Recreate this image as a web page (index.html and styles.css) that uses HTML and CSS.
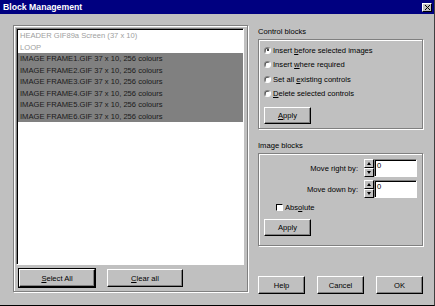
FILE: index.html
```html
<!DOCTYPE html>
<html lang="en">
<head>
    <meta charset="UTF-8">
    <title>Block Management</title>
    <link rel="stylesheet" href="styles.css">
</head>
<body>
    <div class="window">
        <div class="titlebar">
            <span class="title">Block Management</span>
            <span class="close">
                <svg width="5" height="5" viewBox="0 0 5 5"><path d="M0 0L5 5M5 0L0 5" stroke="#000" stroke-width="1"/></svg>
            </span>
        </div>
        <div class="main">
            <div class="group left-group">
                <ul class="list">
                    <li class="dim">HEADER GIF89a Screen (37 x 10)</li>
                    <li class="dim">LOOP</li>
                    <li class="sel">IMAGE FRAME1.GIF 37 x 10, 256 colours</li>
                    <li class="sel">IMAGE FRAME2.GIF 37 x 10, 256 colours</li>
                    <li class="sel">IMAGE FRAME3.GIF 37 x 10, 256 colours</li>
                    <li class="sel">IMAGE FRAME4.GIF 37 x 10, 256 colours</li>
                    <li class="sel">IMAGE FRAME5.GIF 37 x 10, 256 colours</li>
                    <li class="sel">IMAGE FRAME6.GIF 37 x 10, 256 colours</li>
                </ul>
                <div class="list-buttons">
                    <button class="btn default"><u>S</u>elect All</button>
                    <button class="btn"><u>C</u>lear all</button>
                </div>
            </div>

            <div class="side">
                <div class="caption">Control blocks</div>
                <div class="group control-group">
                    <div class="radio-row"><span class="radio checked"></span><span>Insert <u>b</u>efore selected images</span></div>
                    <div class="radio-row"><span class="radio"></span><span>Insert <u>w</u>here required</span></div>
                    <div class="radio-row"><span class="radio"></span><span>Set all <u>e</u>xisting controls</span></div>
                    <div class="radio-row"><span class="radio"></span><span><u>D</u>elete selected controls</span></div>
                    <button class="btn apply"><u>A</u>pply</button>
                </div>

                <div class="caption second">Image blocks</div>
                <div class="group image-group">
                    <div class="field-row">
                        <span class="field-label">Move right by:</span>
                        <span class="spin"><span class="spin-up"></span><span class="spin-down"></span></span>
                        <span class="field">0</span>
                    </div>
                    <div class="field-row">
                        <span class="field-label">Move down by:</span>
                        <span class="spin"><span class="spin-up"></span><span class="spin-down"></span></span>
                        <span class="field">0</span>
                    </div>
                    <div class="check-row"><span class="check"></span><span>Abs<u>o</u>lute</span></div>
                    <button class="btn apply">Apply</button>
                </div>

                <div class="dialog-buttons">
                    <button class="btn">Help</button>
                    <button class="btn">Cancel</button>
                    <button class="btn">OK</button>
                </div>
            </div>
        </div>
    </div>
</body>
</html>
```

FILE: styles.css
```css
*{
    box-sizing: border-box;
}
body{
    margin: 0;
    background-color: #c0c0c0;
    font-family: "Liberation Sans", Arial, sans-serif;
    font-size: 7.6px;
    color: #000;
}
.window{
    width: 435px;
    height: 306px;
    border-bottom: 1px solid #000;
    border-right: 1px solid #404040;
    overflow: hidden;
}
.titlebar{
    height: 14px;
    background-color: #000080;
    display: flex;
    align-items: center;
    justify-content: space-between;
    padding: 0 2px 0 3px;
}
.title{
    color: #fff;
    font-weight: bold;
    font-size: 8.7px;
}
.close{
    width: 10px;
    height: 9px;
    background-color: #c0c0c0;
    border: 1px solid;
    border-color: #fff #000 #000 #fff;
    display: flex;
    align-items: center;
    justify-content: center;
}
.close svg{
    display: block;
}
.main{
    display: flex;
    padding: 11px 0 0 13px;
    gap: 10px;
}

/* etched frames */
.group{
    border: 1px solid #808080;
    box-shadow: inset 1px 1px 0 #fff, 1px 1px 0 #fff;
}
.left-group{
    width: 235px;
    height: 267px;
    padding: 2px 3px 0 2px;
}
.list{
    list-style-type: none;
    margin: 0;
    padding: 0;
    height: 237px;
    background-color: #fff;
    border: 1px solid;
    border-color: #808080 #fff #fff #808080;
    box-shadow: inset 1px 1px 0 #000;
    padding-top: 1px;
}
.list li{
    height: 11.5px;
    line-height: 11.5px;
    padding-left: 2px;
    margin-left: 1px;
    white-space: nowrap;
}
.list li.dim{
    color: #a0a0a0;
}
.list li.sel{
    background-color: #808080;
    color: #1a1a1a;
}
.list-buttons{
    display: flex;
    gap: 12px;
    margin: 4px 0 0 3px;
}
.list-buttons .btn{
    width: 76px;
    height: 18px;
}

/* buttons */
.btn{
    background-color: #c0c0c0;
    border: 1px solid;
    border-color: #fff #000 #000 #fff;
    box-shadow: inset -1px -1px 0 #808080;
    font-family: inherit;
    font-size: 7.6px;
    color: #000;
    padding: 0;
    display: block;
}
.btn.default{
    outline: 1px solid #000;
}

/* right column */
.side{
    width: 165px;
}
.caption{
    height: 14px;
    line-height: 11px;
    padding-top: 1px;
}
.caption.second{
    margin-top: 10px;
}
.control-group{
    height: 90px;
    padding: 3px 0 0 5px;
}
.radio-row{
    height: 14.5px;
    display: flex;
    align-items: center;
}
.radio{
    width: 7px;
    height: 7px;
    border-radius: 50%;
    background-color: #fff;
    border: 1px solid;
    border-color: #808080 #fff #fff #808080;
    box-shadow: inset 0.5px 0.5px 0 #000;
    margin-right: 2px;
    position: relative;
}
.radio.checked::after{
    content: "";
    position: absolute;
    left: 1.5px;
    top: 1.5px;
    width: 2px;
    height: 2px;
    border-radius: 50%;
    background-color: #000;
}
.apply{
    width: 47px;
    height: 17px;
}
.control-group .apply{
    margin-top: 6px;
}
.image-group{
    height: 93px;
    padding: 5px 5px 0 5px;
}
.field-row{
    display: flex;
    align-items: center;
    justify-content: flex-end;
    height: 18px;
    margin-bottom: 3px;
}
.field-label{
    margin-right: 6px;
}
.spin{
    width: 10px;
    height: 18px;
    display: flex;
    flex-direction: column;
}
.spin-up, .spin-down{
    flex: 1;
    background-color: #c0c0c0;
    border: 1px solid;
    border-color: #fff #000 #000 #fff;
    position: relative;
}
.spin-up::after, .spin-down::after{
    content: "";
    position: absolute;
    left: 2px;
    top: 2px;
    border-left: 2px solid transparent;
    border-right: 2px solid transparent;
}
.spin-up::after{
    border-bottom: 3px solid #000;
}
.spin-down::after{
    border-top: 3px solid #000;
}
.field{
    width: 43px;
    height: 18px;
    background-color: #fff;
    border: 1px solid;
    border-color: #808080 #fff #fff #808080;
    box-shadow: inset 1px 1px 0 #000;
    padding-left: 2px;
    line-height: 12px;
}
.check-row{
    display: flex;
    align-items: center;
    height: 12px;
    margin: 3px 0 6px 12px;
}
.check{
    width: 7px;
    height: 7px;
    background-color: #fff;
    border: 1px solid;
    border-color: #000 #fff #fff #000;
    margin-right: 2px;
}
.dialog-buttons{
    display: flex;
    justify-content: space-between;
    margin-top: 30px;
}
.dialog-buttons .btn{
    width: 47px;
    height: 18px;
}
```
